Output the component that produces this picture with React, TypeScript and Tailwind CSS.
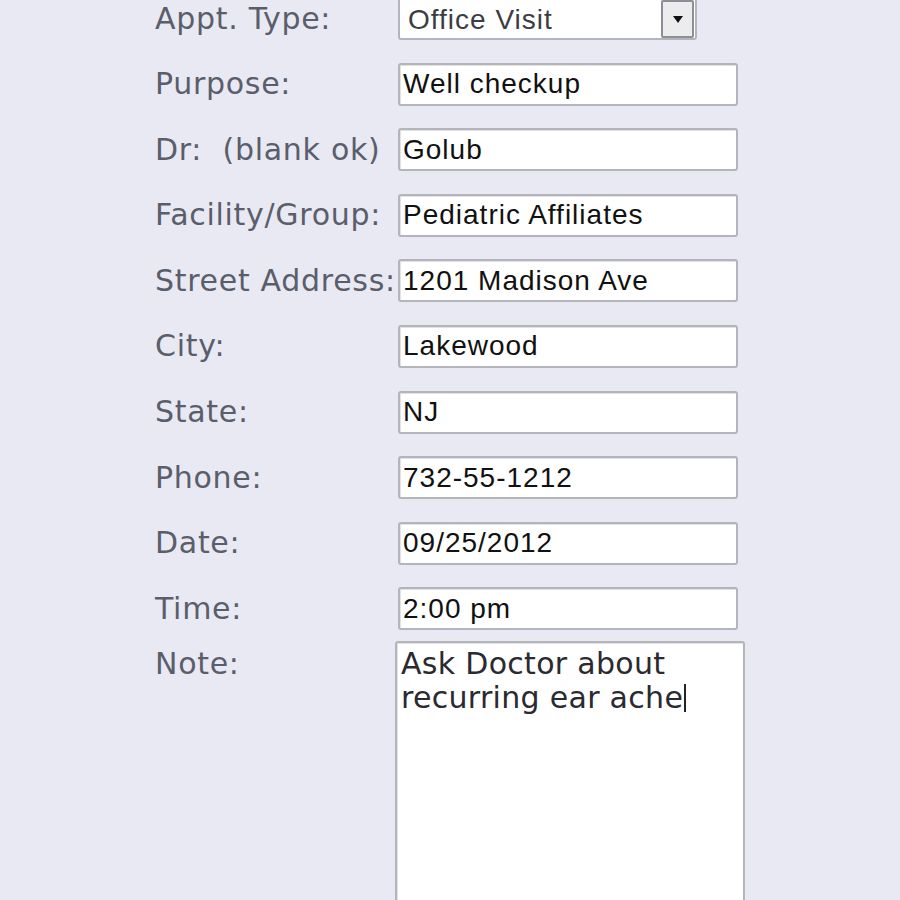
import React from "react"

const fields = [
  { label: "Purpose:", value: "Well checkup" },
  { label: "Dr:  (blank ok)", value: "Golub" },
  { label: "Facility/Group:", value: "Pediatric Affiliates" },
  { label: "Street Address:", value: "1201 Madison Ave" },
  { label: "City:", value: "Lakewood" },
  { label: "State:", value: "NJ" },
  { label: "Phone:", value: "732-55-1212" },
  { label: "Date:", value: "09/25/2012" },
  { label: "Time:", value: "2:00 pm" },
]

const labelCls =
  "w-[243px] shrink-0 whitespace-pre text-[30px] leading-none tracking-[0.7px] text-[#5a5e6b] font-['DejaVu_Sans',sans-serif]"

const inputCls =
  "h-[43px] w-[340px] rounded-[3px] border-2 border-[#b4b4bc] bg-white px-[3px] text-[28px] tracking-[1px] text-[#111] font-['Liberation_Sans',Arial,sans-serif] shadow-[inset_1px_1px_0_#e2e2e2] outline-none"

export default function App() {
  return (
    <div className="min-h-[900px] w-full overflow-hidden bg-[#e9e9f3]">
      <div className="ml-[155px] -mt-[3px] flex flex-col">
        <div className="flex flex-col gap-[22.6px]">
          <div className="flex items-center">
            <span className={labelCls}>Appt. Type:</span>
            <div className="relative h-[43px] w-[299px]">
              <select
                defaultValue="office"
                className="h-full w-full appearance-none rounded-[3px] border-2 border-[#b4b4bc] bg-white pl-[8px] text-[28px] tracking-[1px] text-[#3c3c44] font-['Liberation_Sans',Arial,sans-serif] outline-none"
              >
                <option value="office">Office Visit</option>
                <option value="lab">Lab Work</option>
                <option value="other">Other</option>
              </select>
              <div className="pointer-events-none absolute right-[3px] top-[3px] flex h-[38px] w-[33px] items-center justify-center rounded-[2px] border-2 border-[#8e8e96] bg-[#ececee]">
                <svg width="10" height="7" viewBox="0 0 10 7">
                  <path d="M0 0 L10 0 L5 7 Z" fill="#111" />
                </svg>
              </div>
            </div>
          </div>
          {fields.map((f) => (
            <div key={f.label} className="flex items-center">
              <span className={labelCls}>{f.label}</span>
              <input readOnly value={f.value} className={inputCls} />
            </div>
          ))}
        </div>
        <div className="mt-[11px] flex items-start">
          <span className={labelCls + " pt-[8px]"}>Note:</span>
          <div className="-ml-[3px] h-[300px] w-[350px] rounded-[3px] border-2 border-[#b4b4bc] bg-white px-[4px] pt-[5px] text-[30px] leading-[32px] tracking-[0.3px] text-[#2a2a30] font-['DejaVu_Sans',sans-serif] shadow-[inset_1px_1px_0_#e2e2e2]">
            Ask Doctor about
            <br />
            recurring ear ache
            <span className="ml-[1px] inline-block h-[28px] w-[2px] translate-y-[4px] bg-[#222]" />
          </div>
        </div>
      </div>
    </div>
  )
}
